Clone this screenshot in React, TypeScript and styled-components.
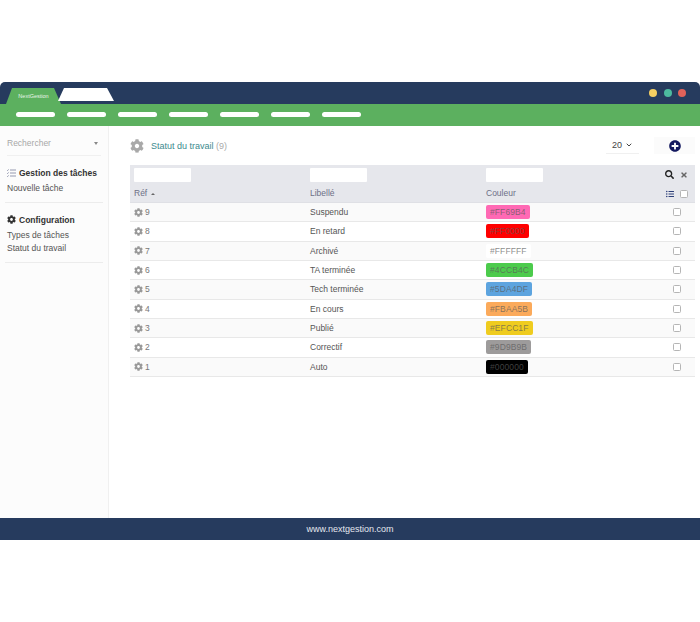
import React from "react";
import styled, { createGlobalStyle } from "styled-components";
import { FaCog, FaListUl, FaPlusCircle, FaSearch, FaTimes } from "react-icons/fa";
import { ChevronDown } from "lucide-react";

const GlobalStyle = createGlobalStyle`
  html, body {
    margin: 0;
    padding: 0;
    background: #fff;
    font-family: "Liberation Sans", Arial, sans-serif;
  }
`;

const Page = styled.div`
  width: 700px;
  height: 622px;
  padding-top: 82px;
  box-sizing: border-box;
  overflow: hidden;
`;

const Frame = styled.div`
  width: 700px;
  height: 458px;
  display: flex;
  flex-direction: column;
`;

const TitleBar = styled.div`
  height: 22px;
  flex: none;
  background: #263b5e;
  border-radius: 5px 5px 0 0;
  display: flex;
  align-items: flex-end;
  padding: 0 14px 0 6px;
`;

const Tab = styled.div<{ $active?: boolean }>`
  width: ${(p) => (p.$active ? "55px" : "56px")};
  height: ${(p) => (p.$active ? "16px" : "13px")};
  margin: ${(p) => (p.$active ? "0 -3px 0 0" : "0 0 3px 0")};
  background: ${(p) => (p.$active ? "#5cb05f" : "#fff")};
  clip-path: polygon(6px 0, calc(100% - 7px) 0, 100% 100%, 0 100%);
  color: #e8f4e8;
  font-size: 5.5px;
  line-height: 17px;
  text-align: center;
`;

const Dots = styled.div`
  margin: 0 0 7px auto;
  display: flex;
  gap: 6.5px;
`;

const Dot = styled.span<{ $color: string }>`
  width: 8px;
  height: 8px;
  border-radius: 50%;
  background: ${(p) => p.$color};
`;

const MenuBar = styled.div`
  height: 22px;
  flex: none;
  background: #5cb05f;
  display: flex;
  align-items: center;
  gap: 12px;
  padding: 0 16px 1px;
  box-sizing: border-box;
`;

const MenuPill = styled.span`
  width: 39px;
  height: 5px;
  border-radius: 3px;
  background: #fff;
`;

const Body = styled.div`
  flex: 1;
  display: flex;
  min-height: 0;
`;

const Sidebar = styled.aside`
  width: 109px;
  flex: none;
  box-sizing: border-box;
  background: #fcfcfc;
  border-right: 1px solid #f0f0f0;
  padding: 0 5px;
`;

const SearchRow = styled.div`
  height: 24px;
  margin: 5px 2px 0;
  padding-right: 3px;
  display: flex;
  align-items: center;
  justify-content: space-between;
  border-bottom: 1px solid #f0f0f0;
  color: #a8a8a8;
  font-size: 8.5px;
`;

const Caret = styled.span`
  width: 0;
  height: 0;
  border-left: 2px solid transparent;
  border-right: 2px solid transparent;
  border-top: 3px solid #888;
`;

const SideGroup = styled.div`
  padding: 10px 2px 6px;
  border-bottom: 1px solid #ececec;
`;

const SideTitle = styled.div`
  display: flex;
  align-items: center;
  gap: 3px;
  height: 14px;
  font-size: 8.5px;
  font-weight: bold;
  color: #333;
  margin-bottom: 2px;
`;

const SideLink = styled.div`
  height: 13.5px;
  font-size: 8.5px;
  line-height: 13.5px;
  color: #555;
`;

const Main = styled.main`
  flex: 1;
  min-width: 0;
  padding: 0 5px 0 21px;
`;

const TopRow = styled.div`
  height: 39px;
  display: flex;
  align-items: center;
`;

const PageTitle = styled.h1`
  margin: 0 0 0 7px;
  font-size: 9px;
  font-weight: normal;
  color: #3c8a8e;

  span {
    color: #aaa;
  }
`;

const PageSize = styled.div`
  margin-left: auto;
  width: 33px;
  height: 16px;
  box-sizing: border-box;
  border-bottom: 1px solid #f0f0f0;
  display: flex;
  align-items: center;
  justify-content: center;
  gap: 3px;
  font-size: 9px;
  color: #444;
`;

const AddButton = styled.div`
  width: 41px;
  height: 17px;
  margin-left: 15px;
  background: #fbfbfb;
  display: flex;
  align-items: center;
  justify-content: center;
  color: #14195f;
`;

const Table = styled.div`
  width: 565px;
`;

const Head = styled.div`
  height: 38px;
  background: #e6e7ec;
  display: grid;
  grid-template-columns: 176px 176px 1fr 46px;
  grid-template-rows: 19px 19px;
  border-bottom: 1px solid #dfe0e5;
  box-sizing: border-box;
`;

const FilterCell = styled.div`
  padding: 3px 0 0 4px;
`;

const FilterBox = styled.div`
  width: 57px;
  height: 14px;
  background: #fff;
  border-radius: 1px;
`;

const HeadLabel = styled.div`
  padding-left: 4px;
  font-size: 8.5px;
  line-height: 19px;
  color: #6c6f86;
  display: flex;
  align-items: center;
  gap: 4px;
`;

const SortCaret = styled.span`
  width: 0;
  height: 0;
  border-left: 2px solid transparent;
  border-right: 2px solid transparent;
  border-bottom: 2.5px solid #666;
`;

const HeadTools = styled.div`
  display: flex;
  align-items: center;
  justify-content: flex-end;
  gap: 6px;
  padding-right: 7px;
`;

const Check = styled.span<{ $small?: boolean }>`
  width: 6px;
  height: 6px;
  display: block;
  border: 1px solid #b5b5b5;
  border-radius: 1.5px;
  background: #fff;
`;

const Row = styled.div<{ $odd: boolean }>`
  height: 19.33px;
  box-sizing: border-box;
  display: grid;
  grid-template-columns: 176px 176px 1fr 46px;
  align-items: center;
  background: ${(p) => (p.$odd ? "#fafafa" : "#fff")};
  border-bottom: 1px solid #e8e8e8;
  font-size: 8.5px;
  color: #555;
`;

const RefCell = styled.div`
  padding-left: 4px;
  display: flex;
  align-items: center;
  gap: 2px;
  color: #777;
`;

const LabelCell = styled.div`
  padding-left: 4px;
`;

const ColorCell = styled.div`
  padding-left: 4px;
`;

const Swatch = styled.span<{ $color: string }>`
  display: inline-block;
  height: 14px;
  line-height: 14px;
  padding: 0 4px;
  border-radius: 2px;
  background: ${(p) => p.$color};
  color: rgba(90, 90, 90, 0.72);
  font-size: 8.5px;
  letter-spacing: 0.1px;
`;

const CheckCell = styled.div`
  display: flex;
  justify-content: flex-end;
  padding-right: 14px;
`;

const Footer = styled.footer`
  height: 22px;
  flex: none;
  background: #263b5e;
  color: #e4e8ee;
  font-size: 9px;
  line-height: 23px;
  text-align: center;
`;

const rows = [
  { id: 9, label: "Suspendu", color: "#FF69B4" },
  { id: 8, label: "En retard", color: "#FF0000" },
  { id: 7, label: "Archivé", color: "#FFFFFF" },
  { id: 6, label: "TA terminée", color: "#4CCB4C" },
  { id: 5, label: "Tech terminée", color: "#5DA4DF" },
  { id: 4, label: "En cours", color: "#FBAA5B" },
  { id: 3, label: "Publié", color: "#EFCC1F" },
  { id: 2, label: "Correctif", color: "#9D9B9B" },
  { id: 1, label: "Auto", color: "#000000" },
];

const TasksIcon = () => (
  <svg width="9" height="8" viewBox="0 0 9 8" fill="none" stroke="#8a8fa8" strokeWidth="0.9">
    <path d="M3 1h6M3 4h6M3 7h6M0 1l.6.6L1.6.4M0 4l.6.6 1-1.2M0 7l.6.6 1-1.2" />
  </svg>
);

export default function App() {
  return (
    <Page>
      <GlobalStyle />
      <Frame>
        <TitleBar>
          <Tab $active>NextGestion</Tab>
          <Tab />
          <Dots>
            <Dot $color="#f5cf62" />
            <Dot $color="#4dbb9f" />
            <Dot $color="#e0625a" />
          </Dots>
        </TitleBar>
        <MenuBar>
          {Array.from({ length: 7 }).map((_, i) => (
            <MenuPill key={i} />
          ))}
        </MenuBar>
        <Body>
          <Sidebar>
            <SearchRow>
              Rechercher
              <Caret />
            </SearchRow>
            <SideGroup>
              <SideTitle>
                <TasksIcon />
                Gestion des tâches
              </SideTitle>
              <SideLink>Nouvelle tâche</SideLink>
            </SideGroup>
            <SideGroup>
              <SideTitle>
                <FaCog size={9} />
                Configuration
              </SideTitle>
              <SideLink>Types de tâches</SideLink>
              <SideLink>Statut du travail</SideLink>
            </SideGroup>
          </Sidebar>
          <Main>
            <TopRow>
              <FaCog size={14} color="#a9a9a9" />
              <PageTitle>
                Statut du travail <span>(9)</span>
              </PageTitle>
              <PageSize>
                20
                <ChevronDown size={8} strokeWidth={3} />
              </PageSize>
              <AddButton>
                <FaPlusCircle size={12} />
              </AddButton>
            </TopRow>
            <Table>
              <Head>
                <FilterCell>
                  <FilterBox />
                </FilterCell>
                <FilterCell>
                  <FilterBox />
                </FilterCell>
                <FilterCell>
                  <FilterBox />
                </FilterCell>
                <HeadTools>
                  <FaSearch size={9} color="#222" />
                  <FaTimes size={8} color="#666" />
                </HeadTools>
                <HeadLabel>
                  Réf
                  <SortCaret />
                </HeadLabel>
                <HeadLabel>Libellé</HeadLabel>
                <HeadLabel>Couleur</HeadLabel>
                <HeadTools>
                  <FaListUl size={8} color="#2c3e78" />
                  <Check />
                </HeadTools>
              </Head>
              {rows.map((row, i) => (
                <Row key={row.id} $odd={i % 2 === 0}>
                  <RefCell>
                    <FaCog size={9} color="#999" />
                    {row.id}
                  </RefCell>
                  <LabelCell>{row.label}</LabelCell>
                  <ColorCell>
                    <Swatch $color={row.color}>{row.color}</Swatch>
                  </ColorCell>
                  <CheckCell>
                    <Check />
                  </CheckCell>
                </Row>
              ))}
            </Table>
          </Main>
        </Body>
        <Footer>www.nextgestion.com</Footer>
      </Frame>
    </Page>
  );
}
